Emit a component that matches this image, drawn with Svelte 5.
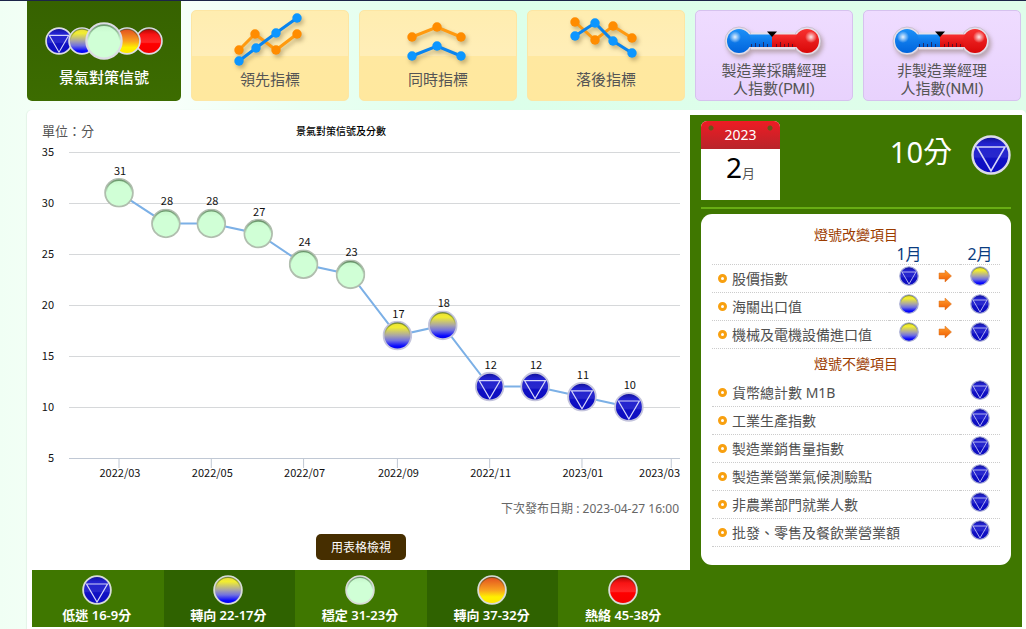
<script lang="ts">
  type Light = 'blue' | 'yellow-blue' | 'green' | 'yellow-red' | 'red';
  type Point = [number, number];

  interface Tab {
    label: string[];
    kind: 'lights' | 'lines' | 'gauge';
    orange?: Point[];
    blue?: Point[];
  }

  // === Tabs ===
  const tabs: Tab[] = [
    { label: ['景氣對策信號'], kind: 'lights' },
    {
      label: ['領先指標'],
      kind: 'lines',
      orange: [[9, 40], [25, 24], [46, 40], [67, 24]],
      blue: [[9, 51], [26, 38], [46, 23], [67, 8]],
    },
    {
      label: ['同時指標'],
      kind: 'lines',
      orange: [[14, 27], [39, 17], [63, 27]],
      blue: [[14, 46], [39, 36], [63, 46]],
    },
    {
      label: ['落後指標'],
      kind: 'lines',
      orange: [[9, 12], [29, 30], [47, 16], [66, 28]],
      blue: [[9, 26], [29, 13], [47, 31], [66, 43]],
    },
    { label: ['製造業採購經理', '人指數(PMI)'], kind: 'gauge' },
    { label: ['非製造業經理', '人指數(NMI)'], kind: 'gauge' },
  ];

  // === Chart ===
  const scores = [
    { month: '2022/03', value: 31 },
    { month: '2022/04', value: 28 },
    { month: '2022/05', value: 28 },
    { month: '2022/06', value: 27 },
    { month: '2022/07', value: 24 },
    { month: '2022/08', value: 23 },
    { month: '2022/09', value: 17 },
    { month: '2022/10', value: 18 },
    { month: '2022/11', value: 12 },
    { month: '2022/12', value: 12 },
    { month: '2023/01', value: 11 },
    { month: '2023/02', value: 10 },
  ];
  const yTicks = [35, 30, 25, 20, 15, 10, 5];
  const xTicks = ['2022/03', '2022/05', '2022/07', '2022/09', '2022/11', '2023/01', '2023/03'];

  const start = Date.UTC(2022, 2, 1);

  function xOf(month: string) {
    const [y, m] = month.split('/').map(Number);
    const days = (Date.UTC(y, m - 1, 1) - start) / 86400000;
    return 87 + days * 1.513;
  }

  function yOf(value: number) {
    return 318 - (value - 5) * 10.2;
  }

  function lightOf(value: number): Light {
    if (value <= 16) return 'blue';
    if (value <= 22) return 'yellow-blue';
    if (value <= 31) return 'green';
    if (value <= 37) return 'yellow-red';
    return 'red';
  }

  const linePoints = scores.map(s => `${xOf(s.month)},${yOf(s.value)}`).join(' ');

  // === Legend ===
  const legend: { light: Light; label: string }[] = [
    { light: 'blue', label: '低迷 16-9分' },
    { light: 'yellow-blue', label: '轉向 22-17分' },
    { light: 'green', label: '穩定 31-23分' },
    { light: 'yellow-red', label: '轉向 37-32分' },
    { light: 'red', label: '熱絡 45-38分' },
  ];

  // === Items ===
  const changed: { name: string; from: Light; to: Light }[] = [
    { name: '股價指數', from: 'blue', to: 'yellow-blue' },
    { name: '海關出口值', from: 'yellow-blue', to: 'blue' },
    { name: '機械及電機設備進口值', from: 'yellow-blue', to: 'blue' },
  ];
  const unchanged: { name: string; light: Light }[] = [
    { name: '貨幣總計數 M1B', light: 'blue' },
    { name: '工業生產指數', light: 'blue' },
    { name: '製造業銷售量指數', light: 'blue' },
    { name: '製造業營業氣候測驗點', light: 'blue' },
    { name: '非農業部門就業人數', light: 'blue' },
    { name: '批發、零售及餐飲業營業額', light: 'blue' },
  ];

  let active = $state(0);
</script>

{#snippet ball(light: Light, cls: string)}
  <svg class={cls} viewBox="0 0 40 40" aria-hidden="true"><use href="#light-{light}" /></svg>
{/snippet}

<!-- Shared shapes -->
<svg class="defs" aria-hidden="true">
  <defs>
    <linearGradient id="g-blue" x1="0" y1="0" x2="0" y2="1">
      <stop offset="0" stop-color="#101090" />
      <stop offset="0.2" stop-color="#2222d0" />
      <stop offset="0.55" stop-color="#2828cc" />
      <stop offset="0.6" stop-color="#1010c4" />
      <stop offset="1" stop-color="#0c0cc0" />
    </linearGradient>
    <linearGradient id="g-yellow-blue" x1="0" y1="0" x2="0" y2="1">
      <stop offset="0" stop-color="#e8d840" />
      <stop offset="0.2" stop-color="#f2ee30" />
      <stop offset="0.5" stop-color="#a8a4a8" />
      <stop offset="0.68" stop-color="#7070e0" />
      <stop offset="0.88" stop-color="#0808ff" />
      <stop offset="1" stop-color="#0000e8" />
    </linearGradient>
    <linearGradient id="g-green" x1="0" y1="0" x2="0" y2="1">
      <stop offset="0" stop-color="#c4f4c8" />
      <stop offset="0.25" stop-color="#d0ffd6" />
      <stop offset="1" stop-color="#d0ffd6" />
    </linearGradient>
    <linearGradient id="g-yellow-red" x1="0" y1="0" x2="0" y2="1">
      <stop offset="0" stop-color="#e04820" />
      <stop offset="0.5" stop-color="#f8a020" />
      <stop offset="0.75" stop-color="#fff000" />
      <stop offset="1" stop-color="#ffe800" />
    </linearGradient>
    <linearGradient id="g-red" x1="0" y1="0" x2="0" y2="1">
      <stop offset="0" stop-color="#a80000" />
      <stop offset="0.25" stop-color="#f81414" />
      <stop offset="0.55" stop-color="#ff2828" />
      <stop offset="0.6" stop-color="#ff0000" />
      <stop offset="1" stop-color="#f40000" />
    </linearGradient>
    <linearGradient id="g-cold" x1="0" y1="0" x2="0" y2="1">
      <stop offset="0" stop-color="#1c90f8" />
      <stop offset="1" stop-color="#0064dc" />
    </linearGradient>
    <linearGradient id="g-hot" x1="0" y1="0" x2="0" y2="1">
      <stop offset="0" stop-color="#f83030" />
      <stop offset="1" stop-color="#d80808" />
    </linearGradient>
    <linearGradient id="g-arrow" x1="0" y1="0" x2="0" y2="1">
      <stop offset="0" stop-color="#ffa030" />
      <stop offset="1" stop-color="#f05a00" />
    </linearGradient>
    <linearGradient id="g-rim" x1="0" y1="0" x2="0" y2="1">
      <stop offset="0" stop-color="#104010" stop-opacity="0.5" />
      <stop offset="0.5" stop-color="#104010" stop-opacity="0" />
    </linearGradient>
    <radialGradient id="g-shine">
      <stop offset="0" stop-color="#fff" stop-opacity="0.9" />
      <stop offset="1" stop-color="#fff" stop-opacity="0" />
    </radialGradient>

    <symbol id="light-blue" viewBox="0 0 40 40">
      <circle cx="20" cy="20" r="18.5" fill="url(#g-blue)" stroke="currentColor" stroke-width="2.4" />
      <path d="M6 12H34L20 36Z" fill="none" stroke="#d4d4fa" stroke-width="1.6" />
    </symbol>
    {#each ['yellow-blue', 'green', 'yellow-red', 'red'] as light}
      <symbol id="light-{light}" viewBox="0 0 40 40">
        <circle cx="20" cy="20" r="18.5" fill="url(#g-{light})" stroke="currentColor" stroke-width="2.4" />
        <circle cx="20" cy="20" r="16.8" fill="none" stroke="url(#g-rim)" stroke-width="1.8" />
      </symbol>
    {/each}
  </defs>
</svg>

<div class="page">
  <!-- Tabs -->
  <nav class="tabs">
    {#each tabs as tab, i}
      <a
        href="#tab-{i}"
        class="tab {tab.kind}"
        class:active={active === i}
        onclick={() => (active = i)}
      >
        <span class="tab-icon">
          {#if tab.kind === 'lights'}
            <svg width="120" height="40" viewBox="0 0 120 40">
              <use href="#light-blue" x="1" y="6" width="28" height="28" />
              <use href="#light-yellow-blue" x="24" y="6" width="28" height="28" />
              <use href="#light-red" x="91" y="6" width="28" height="28" />
              <use href="#light-yellow-red" x="69" y="6" width="28" height="28" />
              <use href="#light-green" x="41" y="1" width="38" height="38" />
            </svg>
          {:else if tab.kind === 'lines'}
            <svg class="trend" width="80" height="53" viewBox="0 1 80 53">
              <polyline points={tab.orange?.join(' ')} fill="none" stroke="#ff9a10" stroke-width="3" />
              {#each tab.orange ?? [] as [x, y]}
                <circle cx={x} cy={y} r="4.7" fill="#ff8c00" />
              {/each}
              <polyline points={tab.blue?.join(' ')} fill="none" stroke="#0a84ee" stroke-width="3" />
              {#each tab.blue ?? [] as [x, y]}
                <circle cx={x} cy={y} r="4.7" fill="#0c96ff" />
              {/each}
            </svg>
          {:else}
            <svg class="trend" width="100" height="53" viewBox="0 1 100 53">
              <g fill="#e6dfea" stroke="#b8acc0" stroke-width="0.6">
                <circle cx="15" cy="31" r="14" />
                <circle cx="83" cy="31" r="14" />
                <path d="M27 22.500H71V39.500H27Z" stroke="none" />
              </g>
              <path d="M15 24.500H48V37H15Z" fill="url(#g-cold)" />
              <path d="M48 24.500H83V37H48Z" fill="url(#g-hot)" />
              <circle cx="15" cy="31" r="12" fill="url(#g-cold)" />
              <circle cx="83" cy="31" r="12" fill="url(#g-hot)" />
              <path
                d="M27.500 34V37M31.500 33V37M35.500 34V37M39.500 32V37M43.500 34V37M52.500 34V37M56.500 32V37M60.500 34V37M64.500 33V37M68.500 34V37"
                stroke="#301030"
                stroke-opacity="0.7"
              />
              <circle cx="11" cy="27" r="6" fill="url(#g-shine)" />
              <circle cx="87" cy="27" r="6" fill="url(#g-shine)" />
              <path d="M43 21.500H53L48 27Z" fill="#000" />
            </svg>
          {/if}
        </span>
        <span class="tab-label">
          {#each tab.label as line}
            <span>{line}</span>
          {/each}
        </span>
      </a>
    {/each}
  </nav>

  <main class="panel">
    <!-- Score chart -->
    <section class="chart">
      <div class="chart-head">
        <span class="unit">單位：分</span>
        <h2>景氣對策信號及分數</h2>
      </div>

      <svg class="plot" viewBox="0 0 658 345" role="img" aria-label="景氣對策信號及分數">
        {#each yTicks as tick}
          <line class="grid" class:axis={tick === 5} x1="37" x2="648" y1={yOf(tick) + 0.5} y2={yOf(tick) + 0.5} />
          <text x="22" y={yOf(tick) + 4} text-anchor="end">{tick}</text>
        {/each}
        {#each xTicks as tick, i}
          <line class="axis" x1={xOf(tick)} x2={xOf(tick)} y1="318" y2="328" />
          <text
            x={i === xTicks.length - 1 ? 648 : xOf(tick) + 1}
            y="337"
            text-anchor={i === xTicks.length - 1 ? 'end' : 'middle'}
          >{tick}</text>
        {/each}

        <polyline class="series" points={linePoints} />
        {#each scores as s}
          <use
            class="marker"
            class:pale={lightOf(s.value) === 'green'}
            href="#light-{lightOf(s.value)}"
            x={xOf(s.month) - 15}
            y={yOf(s.value) - 15}
            width="30"
            height="30"
          />
          <text x={xOf(s.month) + 1} y={yOf(s.value) - 18} text-anchor="middle">{s.value}</text>
        {/each}
      </svg>

      <p class="next">下次發布日期 : 2023-04-27 16:00</p>
      <button class="table-btn" type="button">用表格檢視</button>

      <ul class="legend">
        {#each legend as item}
          <li>
            {@render ball(item.light, 'ball-md')}
            <span>{item.label}</span>
          </li>
        {/each}
      </ul>
    </section>

    <!-- Current month -->
    <aside class="side">
      <div class="summary">
        <div class="calendar">
          <div class="year">2023</div>
          <div class="month"><b>2</b>月</div>
        </div>
        <div class="score">
          <span>10分</span>
          {@render ball('blue', 'ball-lg')}
        </div>
      </div>

      <div class="items">
        <table>
          <caption>燈號改變項目</caption>
          <thead>
            <tr>
              <th></th>
              <th class="cell-light">1月</th>
              <th class="cell-arrow"></th>
              <th class="cell-light">2月</th>
            </tr>
          </thead>
          <tbody>
            {#each changed as item}
              <tr>
                <td class="name">{item.name}</td>
                <td class="cell-light">{@render ball(item.from, 'ball-sm')}</td>
                <td class="cell-arrow">
                  <svg width="14" height="14" viewBox="0 0 14 14" aria-hidden="true">
                    <path d="M1 4H7V1L13.500 7L7 13V10H1Z" fill="url(#g-arrow)" stroke="#d87020" stroke-width="0.5" />
                  </svg>
                </td>
                <td class="cell-light">{@render ball(item.to, 'ball-sm')}</td>
              </tr>
            {/each}
          </tbody>
        </table>

        <table>
          <caption class="second">燈號不變項目</caption>
          <tbody>
            {#each unchanged as item}
              <tr>
                <td class="name">{item.name}</td>
                <td class="cell-light">{@render ball(item.light, 'ball-sm')}</td>
              </tr>
            {/each}
          </tbody>
        </table>
      </div>
    </aside>
  </main>
</div>

<style>
  :global(body) {
    background: #fbfffb;
    font-family: "Noto Sans", "Noto Sans CJK TC", sans-serif;
    color: #555;
  }

  .defs { position: absolute; width: 0; height: 0; }

  .page {
    box-sizing: border-box;
    padding-left: 27px;
    border-top: 1px solid #1c2448;
    background: linear-gradient(90deg, #f0fff4 0, #fbfffc 140px, #eafff2 300px, #dcffea 500px, #dffdea 100%);
  }

  /* Tabs */
  .tabs {
    display: grid;
    grid-template-columns: 154px repeat(5, 1fr);
    align-items: end;
    gap: 10px;
    padding-right: 5px;
  }
  .tab {
    box-sizing: border-box;
    height: 91px;
    border: 1px solid #fde6a4;
    border-radius: 5px;
    background: linear-gradient(#ffedb0 0, #ffeeb8 50%, #ffe8a0 51%, #ffe89e 100%);
    color: #555;
    font-family: Roboto, "Noto Sans CJK TC", sans-serif;
    font-size: 15px;
    line-height: 18px;
    text-align: center;
    text-decoration: none;
  }
  .tab.gauge {
    border-color: #d6c2ee;
    background: linear-gradient(#efdcff, #e8d2fd);
  }
  .tab.lights {
    height: 100px;
    border: 0;
    border-radius: 0 0 5px 5px;
    background: linear-gradient(#366200, #3c6c00);
    color: #fff;
    font-weight: 500;
  }
  .tab-icon {
    display: flex;
    justify-content: center;
    height: 52px;
  }
  .lights .tab-icon { height: 60px; padding-top: 20px; box-sizing: border-box; color: #dcdce4; }
  .trend { flex-shrink: 0; overflow: visible; filter: drop-shadow(2px 3px 2px rgba(90, 70, 30, 0.35)); }
  .tab-label {
    display: flex;
    flex-direction: column;
    justify-content: center;
    height: 34px;
  }

  /* Panel */
  .panel {
    display: grid;
    grid-template-columns: minmax(0, 1fr) 332px;
    margin-top: 9px;
    padding: 5px 4px 2px 5px;
    border-radius: 5px 5px 0 0;
    background: #fff;
    box-shadow: -1px 0 1px #e4f4e8;
  }

  /* Chart */
  .chart { display: flex; flex-direction: column; }
  .chart-head {
    display: grid;
    grid-template-columns: 1fr auto 1fr;
    align-items: center;
    height: 30px;
    padding: 0 50px 0 10px;
    margin-bottom: -5px;
  }
  .unit { font-size: 13px; }
  h2 { margin: 0; font-size: 10px; font-weight: 500; color: #000; }
  .plot { display: block; width: 100%; }
  .plot text { font-size: 11px; fill: #111; font-family: "Noto Sans CJK TC", sans-serif; }
  .grid { stroke: #d6d8da; }
  .axis { stroke: #c0c8d4; }
  .series { fill: none; stroke: #7cb0e6; stroke-width: 2; }
  .marker { color: #c4c4dc; }
  .marker.pale { color: #b0beae; }

  .next {
    margin: 15px 11px 0;
    font-size: 12px;
    line-height: 18px;
    text-align: right;
    color: #666;
  }
  .table-btn {
    align-self: center;
    width: 90px;
    height: 26px;
    margin: 16px 0 10px;
    padding: 0;
    border: 0;
    border-radius: 5px;
    background: #462e00;
    color: #fff;
    font: inherit;
    font-size: 12px;
    cursor: pointer;
  }

  /* Legend */
  .legend {
    display: grid;
    grid-template-columns: repeat(5, 1fr);
    margin: auto 0 0;
    padding: 0;
    list-style: none;
    color: #fff;
    font-size: 13px;
    font-weight: 600;
    line-height: 20px;
  }
  .legend li {
    display: flex;
    flex-direction: column;
    align-items: center;
    height: 52px;
    padding: 5px 2px 0 0;
    background: #3f7700;
  }
  .legend li:nth-child(even) { background: #2f6200; }

  .ball-sm { width: 20px; height: 20px; color: #a8acd4; }
  .ball-md { width: 30px; height: 30px; color: #d8dcd8; }
  .ball-lg { width: 40px; height: 40px; color: #dcdce8; }

  /* Side */
  .side {
    padding: 6px 11px 0;
    background: #3f7700;
  }
  .summary {
    display: flex;
    justify-content: space-between;
    padding-bottom: 7px;
    border-bottom: 2px solid #68ae14;
  }
  .calendar {
    width: 79px;
    background: #fff;
    border-radius: 6px 6px 0 0;
    text-align: center;
  }
  .year {
    height: 28px;
    border-radius: 6px 6px 0 0;
    background:
      radial-gradient(circle at 10px 7px, #6a5418 2px, transparent 3px),
      radial-gradient(circle at 69px 7px, #6a5418 2px, transparent 3px),
      linear-gradient(#ee1c24, #b8242a);
    color: #fff;
    font-size: 14px;
    line-height: 28px;
  }
  .month { height: 51px; font-size: 13px; line-height: 36px; }
  .month b { font-size: 28px; font-weight: 400; color: #000; }
  .score {
    display: flex;
    align-items: center;
    gap: 19px;
    height: 68px;
    color: #fff;
    font-size: 29px;
  }
  .score span { padding-bottom: 10px; }

  /* Items */
  .items {
    margin-top: 5px;
    padding: 11px 11px 18px;
    border-radius: 11px;
    background: #fff;
  }
  table {
    width: 100%;
    border-collapse: separate;
    border-spacing: 0;
  }
  caption {
    height: 20px;
    font-size: 14px;
    line-height: 20px;
    color: #9c3c00;
  }
  caption.second { height: 30px; line-height: 30px; }
  th, td { padding: 0; border-bottom: 1px dotted #ccc; }
  th {
    height: 19px;
    font-size: 16px;
    font-weight: 400;
    line-height: 19px;
    color: #0a3c80;
  }
  td { height: 27px; font-size: 14px; line-height: 20px; }
  .name { color: #505050; }
  .name::before {
    content: '';
    display: inline-block;
    width: 3px;
    height: 3px;
    margin: 0 5px 2px 6px;
    border: 3px solid #f8a010;
    border-radius: 50%;
    vertical-align: middle;
  }
  .cell-light { width: 40px; text-align: center; }
  .cell-arrow { width: 31px; text-align: center; }
  td svg { display: block; margin: 0 auto 5px; }
</style>
